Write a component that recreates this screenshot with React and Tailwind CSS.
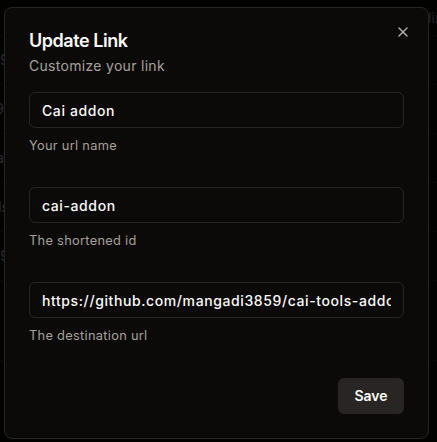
import { X } from 'lucide-react'

const rows = [
  { left: '2859', right: 'nt' },
  { left: '3859/', right: 'nt' },
  { left: 'a1', right: 'nt' },
  { left: 'tools', right: 'nt' },
  { left: '3859', right: 'nt' },
]

const fields = [
  { value: 'Cai addon', hint: 'Your url name' },
  { value: 'cai-addon', hint: 'The shortened id' },
  { value: 'https://github.com/mangadi3859/cai-tools-addon', hint: 'The destination url' },
]

function BackgroundTable() {
  return (
    <div className="w-[437px] text-sm text-stone-300">
      <div className="flex h-[36px] items-center border-b border-stone-800">
        <div className="w-[9px]" />
        <div className="ml-[406px] text-stone-400 whitespace-nowrap">Redirect</div>
      </div>
      {rows.map((r, i) => (
        <div key={i} className="flex h-[49px] items-center border-b border-stone-800">
          <div className="w-[9px] flex justify-end whitespace-nowrap text-slate-300">{r.left}</div>
          <div className="ml-[403px] whitespace-nowrap underline text-slate-300">{r.right}</div>
        </div>
      ))}
      <div className="h-[80px] border-b border-stone-800" />
    </div>
  )
}

export default function App() {
  return (
    <div className="relative w-[437px] h-[442px] overflow-hidden bg-stone-950" style={{ fontFamily: 'Inter, "Noto Sans", sans-serif' }}>
      <BackgroundTable />

      {/* overlay */}
      <div className="absolute inset-0 bg-black/80" />

      {/* dialog */}
      <div className="absolute left-[4px] top-[7px] w-[425px] rounded-lg border border-stone-800 bg-stone-950 p-6 text-stone-50">
        <button className="absolute right-[17px] top-[16px] text-stone-50 opacity-70">
          <X size={16} strokeWidth={2} />
        </button>

        <div className="flex flex-col gap-1.5">
          <h2 className="text-lg font-semibold leading-none tracking-tight">Update Link</h2>
          <p className="text-sm text-stone-400 tracking-[0.3px]">Customize your link</p>
        </div>

        <form className="mt-4 flex flex-col gap-8">
          {fields.map((f) => (
            <div key={f.hint} className="flex flex-col gap-2">
              <input
                readOnly
                value={f.value}
                className="h-9 w-full rounded-md border border-stone-800 bg-transparent px-3 text-sm font-medium tracking-[0.6px] text-stone-50 outline-none"
              />
              <p className="text-[0.8rem] text-stone-400 tracking-[0.3px]">{f.hint}</p>
            </div>
          ))}
          <div className="flex justify-end">
            <button type="button" className="h-9 w-[66px] rounded-md bg-stone-800 text-sm font-semibold text-stone-50">
              Save
            </button>
          </div>
        </form>
      </div>
    </div>
  )
}
